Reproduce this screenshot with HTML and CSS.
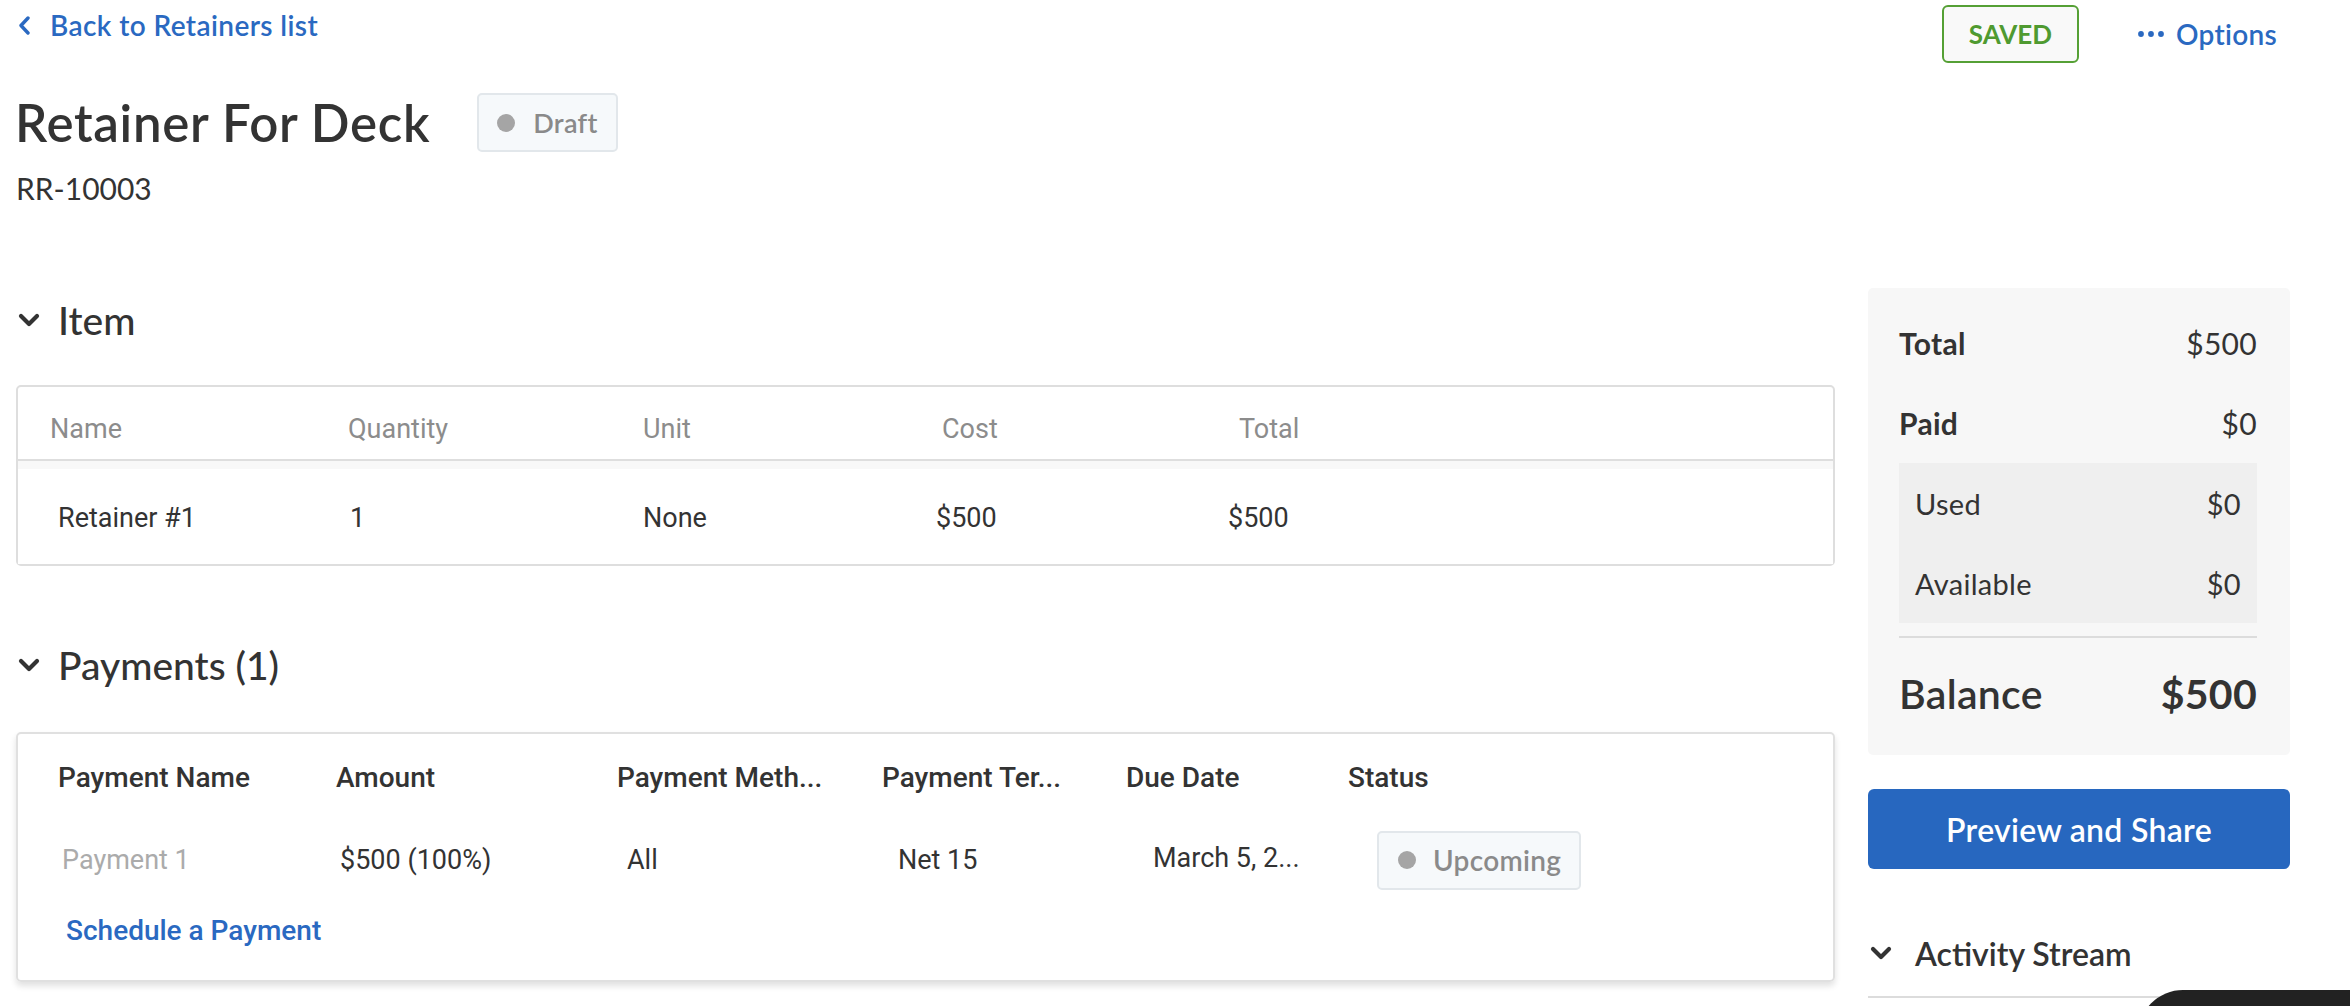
FILE: index.html
```html
<!DOCTYPE html>
<html lang="en">
<head>
    <meta charset="UTF-8">
    <meta name="viewport" content="width=device-width, initial-scale=1.0">
    <title>Retainer For Deck</title>
    <link rel="stylesheet" href="styles.css">
</head>
<body>
<div class="page">
    <div class="main">
        <a class="back-link" href="#">
            <svg class="back-icon" viewBox="0 0 12 19" width="12" height="19"><polyline points="10,2 3,9.5 10,17" fill="none" stroke="currentColor" stroke-width="3.4" stroke-linecap="round" stroke-linejoin="round"/></svg>
            Back to Retainers list
        </a>

        <div class="title-row">
            <h1>Retainer For Deck</h1>
            <span class="status-badge"><span class="dot"></span>Draft</span>
        </div>
        <div class="doc-number">RR-10003</div>

        <!-- Item -->
        <section class="section">
            <h2 class="section-title">
                <svg class="caret" viewBox="0 0 22 15" width="22" height="15"><polyline points="3,3 11,11 19,3" fill="none" stroke="currentColor" stroke-width="4.2" stroke-linecap="round" stroke-linejoin="round"/></svg>
                Item
            </h2>
            <div class="item-table">
                <div class="item-head">
                    <div>Name</div>
                    <div>Quantity</div>
                    <div>Unit</div>
                    <div>Cost</div>
                    <div>Total</div>
                </div>
                <div class="item-body">
                    <div class="item-row">
                        <div class="v-name">Retainer #1</div>
                        <div class="v-qty">1</div>
                        <div class="v-unit">None</div>
                        <div class="v-cost">$500</div>
                        <div class="v-total">$500</div>
                    </div>
                </div>
            </div>
        </section>

        <!-- Payments -->
        <section class="section section-payments">
            <h2 class="section-title">
                <svg class="caret" viewBox="0 0 22 15" width="22" height="15"><polyline points="3,3 11,11 19,3" fill="none" stroke="currentColor" stroke-width="4.2" stroke-linecap="round" stroke-linejoin="round"/></svg>
                Payments (1)
            </h2>
            <div class="payments-card">
                <div class="pay-head">
                    <div>Payment Name</div>
                    <div>Amount</div>
                    <div>Payment Meth...</div>
                    <div>Payment Ter...</div>
                    <div>Due Date</div>
                    <div>Status</div>
                </div>
                <div class="pay-row">
                    <div class="p-name">Payment 1</div>
                    <div class="p-amount">$500 (100%)</div>
                    <div class="p-method">All</div>
                    <div class="p-terms">Net 15</div>
                    <div class="p-due">March 5, 2...</div>
                    <div class="p-status"><span class="status-badge status-small"><span class="dot"></span>Upcoming</span></div>
                </div>
                <a class="schedule-link" href="#">Schedule a Payment</a>
            </div>
        </section>
    </div>

    <aside class="side">
        <div class="top-actions">
            <span class="saved">SAVED</span>
            <a class="options" href="#">
                <svg class="dots" viewBox="0 0 26 6" width="26" height="6"><circle cx="3" cy="3" r="2.9" fill="currentColor"/><circle cx="13" cy="3" r="2.9" fill="currentColor"/><circle cx="23" cy="3" r="2.9" fill="currentColor"/></svg>
                Options
            </a>
        </div>

        <div class="summary">
            <div class="sum-row sum-strong"><span>Total</span><span class="sum-value">$500</span></div>
            <div class="sum-row sum-strong"><span>Paid</span><span class="sum-value">$0</span></div>
            <div class="sum-sub">
                <div class="sum-row"><span>Used</span><span>$0</span></div>
                <div class="sum-row"><span>Available</span><span>$0</span></div>
            </div>
            <div class="sum-balance"><span>Balance</span><span class="balance-value">$500</span></div>
        </div>

        <button class="btn-preview">Preview and Share</button>

        <div class="activity">
            <svg class="caret" viewBox="0 0 22 15" width="22" height="15"><polyline points="3,3 11,11 19,3" fill="none" stroke="currentColor" stroke-width="4.2" stroke-linecap="round" stroke-linejoin="round"/></svg>
            Activity Stream
        </div>
    </aside>
</div>
<div class="chat-bubble"></div>
</body>
</html>
```

FILE: styles.css
```css
body {
    margin: 0;
    font-family: Lato, "Open Sans", sans-serif;
    color: #333333;
    background-color: #ffffff;
    overflow: hidden;
}

a {
    text-decoration: none;
}

.page {
    display: grid;
    grid-template-columns: 1819px 422px;
    column-gap: 33px;
    padding-left: 16px;
}

/* ---- left column ---- */

.back-link {
    display: flex;
    align-items: center;
    gap: 20px;
    margin-top: 10px;
    height: 30px;
    color: #2a69c1;
    font-size: 28px;
    font-weight: 600;
    letter-spacing: 0.4px;
}

.back-icon {
    margin-left: 2px;
}

.title-row {
    display: flex;
    align-items: center;
    gap: 47px;
    margin-top: 53px;
    height: 59px;
}

.title-row h1 {
    margin: 0 0 0 -1px;
    font-size: 51px;
    font-weight: 600;
    letter-spacing: 0.7px;
    line-height: 59px;
    color: #333333;
}

.status-badge {
    display: inline-flex;
    align-items: center;
    gap: 18px;
    box-sizing: border-box;
    height: 59px;
    padding: 0 18px;
    background-color: #f6f9fb;
    border: 2px solid #e2e7eb;
    border-radius: 5px;
    color: #8a8a8a;
    font-size: 27px;
    font-weight: 600;
    letter-spacing: 0.3px;
}

.status-badge .dot {
    width: 18px;
    height: 18px;
    border-radius: 50%;
    background-color: #a5a5a5;
}

.doc-number {
    margin-top: 18px;
    height: 36px;
    line-height: 36px;
    font-size: 30px;
}

.section-title {
    display: flex;
    align-items: center;
    gap: 18px;
    margin: 92px 0 0;
    height: 44px;
    font-size: 39px;
    font-weight: 500;
    color: #333333;
}

.caret {
    margin-left: 2px;
    color: #333333;
}

.section-payments .section-title {
    margin-top: 77px;
}

.item-table {
    margin-top: 43px;
    border: 2px solid #dedede;
    border-radius: 5px;
    font-family: Roboto, sans-serif;
    font-size: 27px;
}

.item-head,
.item-row {
    display: grid;
    grid-template-columns: 298px 295px 299px 297px 1fr;
    align-items: center;
    padding-left: 32px;
}

.item-head {
    box-sizing: border-box;
    height: 74px;
    padding-top: 12px;
    border-bottom: 2px solid #dedede;
    color: #8c8c8c;
}

.item-body {
    background: linear-gradient(#f8f8f8 0, #f8f8f8 8px, #ffffff 8px);
}

.item-row {
    height: 93px;
    padding-top: 10px;
    color: #333333;
}

.v-name { margin-left: 8px; }
.v-qty { margin-left: 2px; }
.v-cost { margin-left: -6px; }
.v-total { margin-left: -11px; }

.payments-card {
    margin-top: 45px;
    height: 250px;
    box-sizing: border-box;
    border: 2px solid #e0e0e0;
    border-radius: 5px;
    box-shadow: 0 4px 6px rgba(0, 0, 0, 0.12);
    font-family: Roboto, sans-serif;
    font-size: 27px;
}

.pay-head,
.pay-row {
    display: grid;
    grid-template-columns: 278px 281px 265px 244px 222px 1fr;
    align-items: center;
    padding-left: 40px;
}

.pay-head {
    height: 86px;
    font-size: 28px;
    font-weight: 500;
    color: #333333;
}

.pay-row {
    height: 80px;
}

.p-name { margin-left: 4px; color: #ababab; }
.p-amount { margin-left: 4px; }
.p-method { margin-left: 10px; }
.p-terms { margin-left: 16px; }
.p-due { margin-left: 27px; margin-top: -4px; }
.p-status { margin-left: 29px; }

.status-small {
    gap: 17px;
    padding: 0 18px 0 19px;
    font-family: Lato, sans-serif;
    font-size: 28px;
}

.schedule-link {
    display: block;
    margin: 11px 0 0 48px;
    height: 40px;
    line-height: 40px;
    color: #2a69c1;
    font-size: 28px;
    font-weight: 500;
}

/* ---- right column ---- */

.top-actions {
    display: flex;
    justify-content: flex-end;
    align-items: center;
    gap: 59px;
    margin-top: 5px;
    padding-right: 13px;
}

.saved {
    display: flex;
    align-items: center;
    justify-content: center;
    box-sizing: border-box;
    width: 137px;
    height: 58px;
    border: 2px solid #55a035;
    border-radius: 6px;
    background-color: #f9f9f9;
    color: #4f9a30;
    font-size: 26px;
    font-weight: 700;
}

.options {
    display: flex;
    align-items: center;
    gap: 12px;
    color: #2a69c1;
    font-size: 28px;
    font-weight: 600;
    letter-spacing: 0.3px;
}

.summary {
    margin-top: 225px;
    padding: 15px 33px 7px 31px;
    background-color: #f7f7f7;
    border-radius: 5px;
}

.sum-row {
    display: flex;
    justify-content: space-between;
    align-items: center;
    height: 80px;
    font-size: 29px;
    letter-spacing: 0.3px;
}

.sum-strong {
    font-size: 30px;
    font-weight: 700;
}

.sum-strong .sum-value {
    font-weight: 400;
}

.sum-sub {
    padding: 0 16px;
    background-color: #efefef;
}

.sum-balance {
    display: flex;
    justify-content: space-between;
    align-items: center;
    height: 110px;
    margin-top: 13px;
    border-top: 2px solid #dcdcdc;
    font-size: 41px;
    font-weight: 600;
    letter-spacing: 0.3px;
}

.balance-value {
    font-weight: 700;
}

.btn-preview {
    display: block;
    width: 100%;
    height: 80px;
    margin-top: 34px;
    border: none;
    border-radius: 6px;
    background-color: #2767bf;
    color: #ffffff;
    font-family: Lato, sans-serif;
    font-size: 32px;
    font-weight: 600;
    letter-spacing: 0.3px;
    cursor: pointer;
}

.activity {
    display: flex;
    align-items: center;
    gap: 23px;
    margin-top: 62px;
    height: 44px;
    padding-bottom: 21px;
    border-bottom: 2px solid #dcdcdc;
    font-size: 32px;
    font-weight: 600;
}

/* chat widget peeking in from the bottom corner */
.chat-bubble {
    position: fixed;
    left: 2138px;
    bottom: -74px;
    width: 260px;
    height: 90px;
    border-radius: 45px;
    background-color: #222222;
}
```
